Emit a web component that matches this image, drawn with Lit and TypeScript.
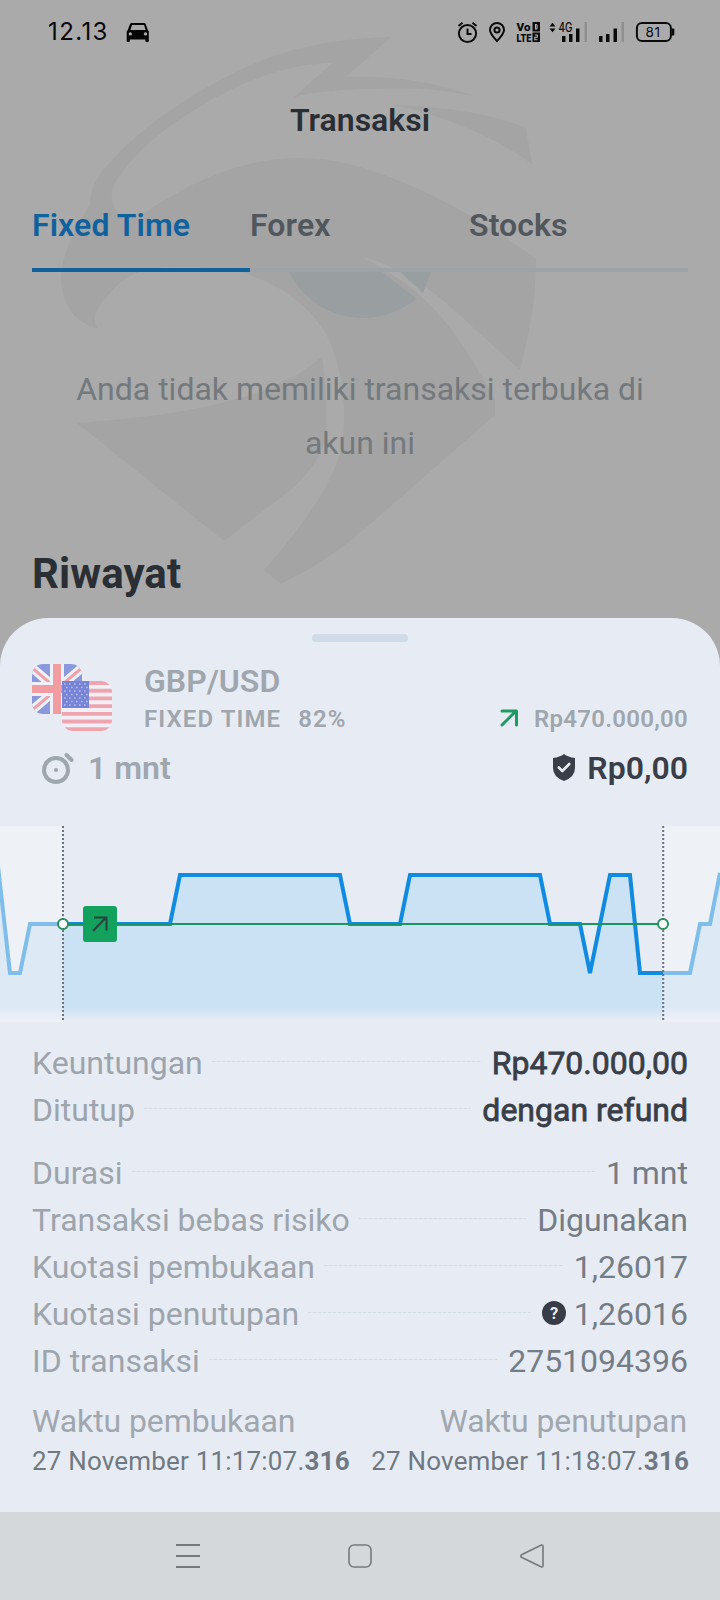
import { LitElement, html, css, svg } from "lit";
import { customElement, property } from "lit/decorators.js";

@customElement("status-bar")
class StatusBar extends LitElement {
  static styles = css`
    :host { display: flex; align-items: center; height: 64px; padding: 0 45px 0 48px; color: #080808; }
    .time { font: 400 24px/64px Inter, sans-serif; letter-spacing: 1.4px; }
    .car { margin-left: 17px; }
    .icons { margin-left: auto; }
    svg { display: block; }
    .tiny { font: 900 11.5px Roboto, sans-serif; }
    .net { font: 500 12.5px Inter, sans-serif; }
    .battery { font: 400 13.5px Inter, sans-serif; }
  `;
  render() {
    return html`
      <span class="time">12.13</span>
      <svg class="car" width="24" height="22" viewBox="0 0 24 22">
        <path fill="#050505" fill-rule="evenodd" d="M6 2h12q1.400 0 1.900 1.400L21.800 9l1 1.200v9.800q0 1-1 1h-1.400q-1 0-1-1v-1.500H3.800V20q0 1-1 1H1.700q-1 0-1-1v-9.800L1.800 9l2-5.600Q4.400 2 6 2zM6 4L4.400 9h15.200L18 4zM4.300 11.200a1.700 1.700 0 1 0 0 3.400 1.700 1.700 0 0 0 0-3.400zm15.200 0a1.700 1.700 0 1 0 0 3.400 1.700 1.700 0 0 0 0-3.400z"/>
      </svg>
      <svg class="icons" width="220" height="30" viewBox="455 17 220 30" fill="none" stroke="#0b0b0b" stroke-width="2">
        <circle cx="467.500" cy="33.500" r="8.600"/><path d="M467.500 28.500v5.500h4M458.500 26l4-3.200M476.500 26l-4-3.200"/>
        <path d="M497 41c-4-4.200-7-7.300-7-11a7 7 0 0 1 14 0c0 3.700-3 6.800-7 11z"/><circle cx="497" cy="30" r="2.600"/>
        <g stroke="none" fill="#0b0b0b">
          <text class="tiny" x="516.500" y="30.500" textLength="14" lengthAdjust="spacingAndGlyphs">Vo</text>
          <text class="tiny" x="516.500" y="42" textLength="15" lengthAdjust="spacingAndGlyphs">LTE</text>
          <rect x="532.500" y="22" width="7.500" height="9.500"/><rect x="532.500" y="32.500" width="7.500" height="9.500"/>
          <path d="M549.500 26.500l3-3.800 3 3.800zM549.500 28.500l3 3.800 3-3.800z"/>
          <text class="net" x="558.500" y="31.500" textLength="14" lengthAdjust="spacingAndGlyphs">4G</text>
          <rect x="562" y="36" width="3.500" height="6"/><rect x="569" y="34" width="3.500" height="8"/><rect x="576" y="28.500" width="3.500" height="13.500"/>
          <rect x="599" y="36" width="3.500" height="6"/><rect x="606" y="34" width="3.500" height="8"/><rect x="613.500" y="28.500" width="3.500" height="13.500"/>
          <path fill="#8f8f8f" d="M584.500 22h2.500v20h-2.500zM621.500 22h2.500v20h-2.500z"/>
          <path d="M672 28.500h1.500q.8 0 .8.800v5.500q0 .8-.8.800H672z"/>
          <text class="battery" x="652.800" y="36.900" text-anchor="middle" textLength="14.500">81</text>
        </g>
        <path stroke="#b8b8b8" stroke-width="1.100" d="M535.500 24.500v4.500h.6q1 0 1-1v-2.500q0-1-1-1zM534.800 35h2.500v2.200h-2.500v2.500h2.700"/>
        <rect x="636.900" y="23" width="34" height="18" rx="5"/>
      </svg>`;
  }
}

@customElement("bird-mark")
class BirdMark extends LitElement {
  static styles = css`
    :host { position: absolute; inset: 0; }
    svg { display: block; }
  `;
  render() {
    return html`<svg width="720" height="618" viewBox="0 0 720 618">
      <g fill="#a4a4a4">
        <path d="M391 37C340 38 287 47 240 70C190 94 145 125 115 157C97 176 91 185 90 205C70 236 62 258 61 278C62 305 74 322 98 329C90 315 98 306 113 290C128 272 150 267 175 267C210 267 232 269 250 275C290 290 316 313 329 340C345 375 348 423 340 453C330 488 304 524 264 570L281 584C315 567 340 550 367 527L495 415V400C482 378 475 363 460 342C440 313 418 286 362 257C420 271 448 306 520 370C530 330 536 300 536 259C507 237 455 204 407 184C370 168 335 158 301 158C245 158 200 177 150 209C138 218 125 221 118 213C109 201 110 189 118 178C140 146 170 124 211 100C250 78 290 64 332 63L293 98C310 90 375 87 425 89Q450 91 477 97C445 85 400 75 346 77Z"/>
        <path d="M391 105C440 106 490 113 526 128Q529 147 532 164C492 134 430 111 391 105Z"/>
        <path d="M77 423C160 417 270 405 322 356Q327 390 326 430Q325 458 293 488L224 541Z"/>
      </g>
      <path fill="#999ea1" d="M289 272C304 301 331 318 365 318Q392 317 417 299L382 272ZM398 270L423 293L431 272Z"/>
    </svg>`;
  }
}

@customElement("price-chart")
class PriceChart extends LitElement {
  static styles = css`:host, svg { display: block; }`;
  render() {
    const line = "-2,866 10,973 20,973 30,924 170,924 180,875 340,875 350,924 400,924 410,875 540,875 550,924 580,924 590,973 610,875 630,875 640,973 690,973 700,924 710,924 720,873";
    const graph = (id: string, fade: number) => svg`
      <g clip-path="url(#${id})" opacity=${fade}>
        <polygon fill="url(#area)" points="-2,1021 ${line} 720,1021"/>
        <polyline fill="none" stroke="#108be0" stroke-width="4" stroke-miterlimit="3" points=${line}/>
      </g>`;
    return html`<svg width="720" height="196" viewBox="0 826 720 196">
      <defs>
        <linearGradient id="area" gradientUnits="userSpaceOnUse" x1="0" y1="875" x2="0" y2="1021">
          <stop offset="0" stop-color="#cbe1f4"/><stop offset=".9" stop-color="#cbe1f4"/><stop offset="1" stop-color="#cbe1f4" stop-opacity="0"/>
        </linearGradient>
        <clipPath id="inside"><rect x="63" y="826" width="600" height="196"/></clipPath>
        <clipPath id="outside"><path d="M0 826h63v196H0zM663 826h57v196h-57z"/></clipPath>
      </defs>
      <path fill="#eef1f6" d="M0 826h63v196H0zM663 826h57v196h-57z"/>
      ${graph("outside", 0.5)}${graph("inside", 1)}
      <path fill="none" stroke="#6b7280" stroke-width="2" stroke-dasharray="2 2" d="M63 826v194M663.200 826v194"/>
      <path stroke="#1c9560" stroke-width="2" d="M63 924h600"/>
      <g fill="#fff" stroke="#2a8f5d" stroke-width="2"><circle cx="63" cy="924" r="5"/><circle cx="663" cy="924" r="5"/></g>
      <rect x="83" y="906" width="34" height="36" rx="3" fill="#13a25e"/>
      <path fill="none" stroke="#29423f" stroke-width="2" d="M93 931l13-13.500M94 917.500h12.500v13"/>
    </svg>`;
  }
}

@customElement("detail-row")
class DetailRow extends LitElement {
  @property() label = "";
  @property() value = "";
  @property({ type: Boolean }) strong = false;
  @property({ type: Boolean }) help = false;
  static styles = css`
    :host { display: flex; align-items: center; height: 47px; font-size: 32px; line-height: 47px; white-space: nowrap; color: #9da4ac; }
    .rule { flex: 1; height: 1px; margin: 0 11px 5px 9px; background: repeating-linear-gradient(90deg, #d3dbe3 0 3px, #dfe5ed 3px 5px); }
    .value { color: #747d86; }
    .strong { color: #393e48; -webkit-text-stroke: 0.8px #393e48; }
    svg { margin: 0 8px 3px 0; }
    .q { font: 700 16.5px Roboto, sans-serif; }
  `;
  render() {
    return html`<span>${this.label}</span><span class="rule"></span>
      ${this.help ? html`<svg width="24" height="24"><circle cx="12" cy="12" r="12" fill="#373c47"/><text class="q" x="12" y="17.800" text-anchor="middle" fill="#e7ecf4">?</text></svg>` : null}
      <span class="value ${this.strong ? "strong" : ""}">${this.value}</span>`;
  }
}

@customElement("app-root")
class AppRoot extends LitElement {
  static styles = css`
    :host { display: flex; flex-direction: column; position: relative; width: 720px; height: 1600px; overflow: hidden; background: #aaaaaa; font-family: Roboto, sans-serif; }
    status-bar, .page { position: relative; }
    .page { height: 554px; padding: 0 32px; box-sizing: border-box; }
    .title { height: 112px; line-height: 112px; text-align: center; font-size: 32px; font-weight: 600; color: #292f34; }
    .tabs { display: grid; grid-template-columns: 218px 219px 1fr; height: 96px; font-size: 32px; font-weight: 600; line-height: 98px; letter-spacing: .1px; color: #51575d; }
    .tab { border-bottom: 4px solid #9ca2a6; height: 92px; }
    .active { color: #10629f; border-color: #10629f; }
    .empty { margin: 90px 0 0; padding: 0; font-size: 32px; line-height: 54px; text-align: center; color: #73797d; }
    h1 { margin: 74px 0 0; font-size: 42px; line-height: 60px; font-weight: 700; letter-spacing: .1px; color: #292f34; }
    .sheet { display: flex; flex-direction: column; height: 894px; background: #e7ecf4; border-radius: 48px 48px 0 0; z-index: 1; }
    .handle { width: 96px; height: 8px; margin: 16px auto 22px; border-radius: 4px; background: #cfdbe7; }
    .head { display: grid; grid-template-columns: 112px 1fr auto; padding: 0 32px; height: 68px; color: #9fa6ad; font-weight: 600; white-space: nowrap; }
    .pair { font-size: 32px; line-height: 34px; }
    .sub { font-size: 24px; line-height: 42px; letter-spacing: 1.1px; }
    .pct { margin-left: 17px; }
    .amount { display: flex; align-items: center; gap: 15px; align-self: start; margin-top: 39px; height: 32px; font-size: 24px; line-height: 32px; letter-spacing: .25px; }
    .amount svg { margin-top: -2px; }
    .stake { display: flex; align-items: center; height: 53px; margin-top: 9px; padding: 0 32px 0 41px; font-size: 32px; line-height: 60px; font-weight: 600; color: #9fa6ad; }
    .clock { margin-right: 14px; }
    .shield { margin: 0 12px 0 auto; }
    .result { color: #393e48; }
    price-chart { margin-top: 32px; margin-bottom: 18px; }
    .rows { padding: 0 32px; }
    .rows + .rows { margin-top: 16px; }
    .times { display: flex; justify-content: space-between; padding: 0 31px 0 32px; margin-top: 14px; white-space: nowrap; }
    .times .cell:last-child { text-align: right; }
    .cap { font-size: 32px; line-height: 45px; letter-spacing: -.1px; padding-right: 2px; color: #a1a7ae; }
    .date { font-size: 26px; line-height: 34px; letter-spacing: .18px; color: #707982; }
    .date b { font-weight: 700; }
    .nav { display: flex; justify-content: center; align-items: center; gap: 148px; height: 88px; background: #d4d8db; }
    svg { display: block; }
  `;
  render() {
    return html`
      <bird-mark></bird-mark>
      <status-bar></status-bar>
      <div class="page">
        <div class="title">Transaksi</div>
        <div class="tabs"><div class="tab active">Fixed Time</div><div class="tab">Forex</div><div class="tab">Stocks</div></div>
        <p class="empty">Anda tidak memiliki transaksi terbuka di<br>akun ini</p>
        <h1>Riwayat</h1>
      </div>
      <div class="sheet">
        <div class="handle"></div>
        <div class="head">
          <svg width="80" height="68" viewBox="0 0 80 68">
            <defs>
              <clipPath id="uk"><rect width="50" height="50" rx="11"/></clipPath>
              <clipPath id="us"><rect x="30" y="17" width="50" height="50" rx="11"/></clipPath>
            </defs>
            <g clip-path="url(#uk)">
              <path fill="#8b98dc" d="M0 0h50v50H0z"/>
              <path stroke="#eef1fa" stroke-width="9" d="M-8-3l66 56M-8 53L58-3"/>
              <path stroke="#f0a0a6" stroke-width="3" d="M-8-3l66 56M-8 53L58-3"/>
              <path stroke="#eef1fa" stroke-width="14" d="M25 0v50M0 25h50"/>
              <path stroke="#f19ca0" stroke-width="8" d="M25 0v50M0 25h50"/>
            </g>
            <g clip-path="url(#us)">
              <path fill="#f0f0f6" d="M30 17h50v50H30z"/>
              <path stroke="#efa5af" stroke-width="3.850" d="M30 19h50M30 26.700h50M30 34.400h50M30 42.100h50M30 49.800h50M30 57.500h50M30 65.200h50"/>
            </g>
            <path fill="#7885d6" d="M30 17h27v27H30z"/>
            <path fill="none" stroke="#b5bfee" stroke-width="1.600" stroke-dasharray="1.600 3.400" d="M32 20h24M34 23.500h22M32 27h24M34 30.500h22M32 34h24M34 37.500h22M32 41h24"/>
          </svg>
          <div><div class="pair">GBP/USD</div><div class="sub">FIXED TIME<span class="pct">82%</span></div></div>
          <div class="amount">
            <svg width="20" height="20" fill="none" stroke="#1e9b63" stroke-width="3" stroke-linecap="round" stroke-linejoin="round"><path d="M3 17L17 3M3 3h14.500v14"/></svg>
            <span>Rp470.000,00</span>
          </div>
        </div>
        <div class="stake">
          <svg class="clock" width="33" height="34" fill="none" stroke="#9fa6ad"><circle cx="15" cy="19" r="12" stroke-width="4"/><path stroke-width="4" stroke-linecap="round" d="M25.500 4l5 5"/><circle cx="15" cy="19" r="2" fill="#9fa6ad" stroke="none"/></svg>
          <span>1 mnt</span>
          <svg class="shield" width="22" height="27"><path fill="#393e48" d="M11 0Q15 3 22 4v10q0 9-11 13Q0 23 0 14V4Q7 3 11 0z"/><path fill="none" stroke="#e7ecf4" stroke-width="2.600" stroke-linecap="round" stroke-linejoin="round" d="M5.800 13.500l3.500 3.500 7-7"/></svg>
          <span class="result">Rp0,00</span>
        </div>
        <price-chart></price-chart>
        <div class="rows">
          <detail-row label="Keuntungan" value="Rp470.000,00" strong></detail-row>
          <detail-row label="Ditutup" value="dengan refund" strong></detail-row>
        </div>
        <div class="rows">
          <detail-row label="Durasi" value="1 mnt"></detail-row>
          <detail-row label="Transaksi bebas risiko" value="Digunakan"></detail-row>
          <detail-row label="Kuotasi pembukaan" value="1,26017"></detail-row>
          <detail-row label="Kuotasi penutupan" value="1,26016" help></detail-row>
          <detail-row label="ID transaksi" value="2751094396"></detail-row>
        </div>
        <div class="times">
          <div class="cell"><div class="cap">Waktu pembukaan</div><div class="date">27 November 11:17:07.<b>316</b></div></div>
          <div class="cell"><div class="cap">Waktu penutupan</div><div class="date">27 November 11:18:07.<b>316</b></div></div>
        </div>
      </div>
      <div class="nav">
        <svg width="24" height="24" stroke="#74797c" stroke-width="2"><path d="M0 1h24M0 12h24M0 23h24"/></svg>
        <svg width="24" height="24" fill="none" stroke="#74797c" stroke-width="1.600"><rect x="1" y="1" width="22" height="22" rx="5"/></svg>
        <svg width="24" height="24" fill="none" stroke="#74797c" stroke-width="1.600" stroke-linejoin="round"><path d="M1.500 10.800L21 1.200q2-.7 2 1.200v19.200q0 1.900-2 1.200L1.500 13.200q-1.500-1.200 0-2.400z"/></svg>
      </div>`;
  }
}
